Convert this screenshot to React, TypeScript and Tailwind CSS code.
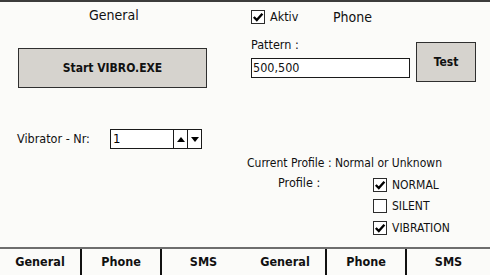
import React from 'react';

const FONT = { fontFamily: '"DejaVu Sans Condensed", "DejaVu Sans", sans-serif' };

const Check: React.FC<{ checked: boolean }> = ({ checked }) => (
    <div className="w-[14px] h-[14px] border border-[#2b2b2b] bg-white flex items-center justify-center shrink-0">
        {checked && (
            <svg width="12" height="12" viewBox="0 0 12 12">
                <path d="M1.8 6 L4.8 9 L10.4 2.8" fill="none" stroke="#000" strokeWidth="2.4" />
            </svg>
        )}
    </div>
);

const Spinner: React.FC<{ value: string }> = ({ value }) => (
    <div className="flex w-[92px] h-[20px] border border-[#1a1a1a] bg-white">
        <div className="flex-1 pl-[2px] text-[13px] leading-[18px] text-black">{value}</div>
        <div className="w-[14px] border-l border-[#1a1a1a] flex items-center justify-center">
            <svg width="8" height="5" viewBox="0 0 8 5"><path d="M0 5 L4 0 L8 5 Z" fill="#000" /></svg>
        </div>
        <div className="w-[14px] border-l border-[#1a1a1a] flex items-center justify-center">
            <svg width="8" height="5" viewBox="0 0 8 5"><path d="M0 0 L8 0 L4 5 Z" fill="#000" /></svg>
        </div>
    </div>
);

const TabBar: React.FC = () => (
    <div className="flex w-[245px] h-full border-t-2 border-[#6e6e6e]">
        <div className="w-[80px] flex items-center justify-center font-bold text-[12.5px]">General</div>
        <div className="w-[82px] border-l-2 border-r-2 border-[#111] flex items-center justify-center font-bold text-[12.5px]">Phone</div>
        <div className="flex-1 flex items-center justify-center font-bold text-[12.5px]">SMS</div>
    </div>
);

export default function App() {
    return (
        <div className="w-[490px] h-[275px] bg-[#fbfbf9] border-t-2 border-[#3c3c3c] flex flex-col text-[#111] overflow-hidden" style={FONT}>
            <div className="flex flex-1">
                {/* General panel */}
                <div className="w-[245px] flex flex-col">
                    <div className="mt-[5px] ml-[89px] text-[14px] leading-[16px]">General</div>
                    <button className="mt-[25px] ml-[18px] w-[189px] h-[40px] bg-[#d6d3ce] border border-[#2f2f2f] font-bold text-[12px]">
                        Start VIBRO.EXE
                    </button>
                    <div className="mt-[41px] flex items-center h-[20px] text-[12.5px]">
                        <span className="ml-[17px] w-[93px]">Vibrator - Nr:</span>
                        <Spinner value="1" />
                    </div>
                </div>

                {/* Phone panel */}
                <div className="w-[245px] flex flex-col text-[12px]">
                    <div className="mt-[8px] ml-[6px] flex items-center h-[14px]">
                        <Check checked />
                        <span className="ml-[5px] w-[63px] text-[12.5px]">Aktiv</span>
                        <span className="text-[14px]">Phone</span>
                    </div>
                    <div className="mt-[14px] ml-[6px] flex items-start">
                        <div className="flex flex-col">
                            <div className="h-[14px] leading-[14px] text-[12.5px]">Pattern :</div>
                            <div className="mt-[6px] w-[159px] h-[20px] border border-[#1a1a1a] bg-white pl-[1px] leading-[18px] text-[12.5px]">500,500</div>
                        </div>
                        <button className="mt-[4px] ml-[6px] w-[60px] h-[40px] bg-[#d6d3ce] border border-[#2f2f2f] font-bold text-[12px]">
                            Test
                        </button>
                    </div>
                    <div className="mt-[74px] ml-[2px] h-[14px] leading-[14px]">Current Profile : Normal or Unknown</div>
                    <div className="mt-[4px] flex">
                        <div className="ml-[33px] w-[95px] h-[21px] leading-[18px] text-[12.5px]">Profile :</div>
                        <div className="flex flex-col">
                            {[
                                ['NORMAL', true],
                                ['SILENT', false],
                                ['VIBRATION', true],
                            ].map(([label, on]) => (
                                <div key={label as string} className="flex items-center h-[21.5px]">
                                    <Check checked={on as boolean} />
                                    <span className="ml-[5px]">{label as string}</span>
                                </div>
                            ))}
                        </div>
                    </div>
                </div>
            </div>

            {/* Tabs */}
            <div className="flex h-[28px]">
                <TabBar />
                <TabBar />
            </div>
        </div>
    );
}
